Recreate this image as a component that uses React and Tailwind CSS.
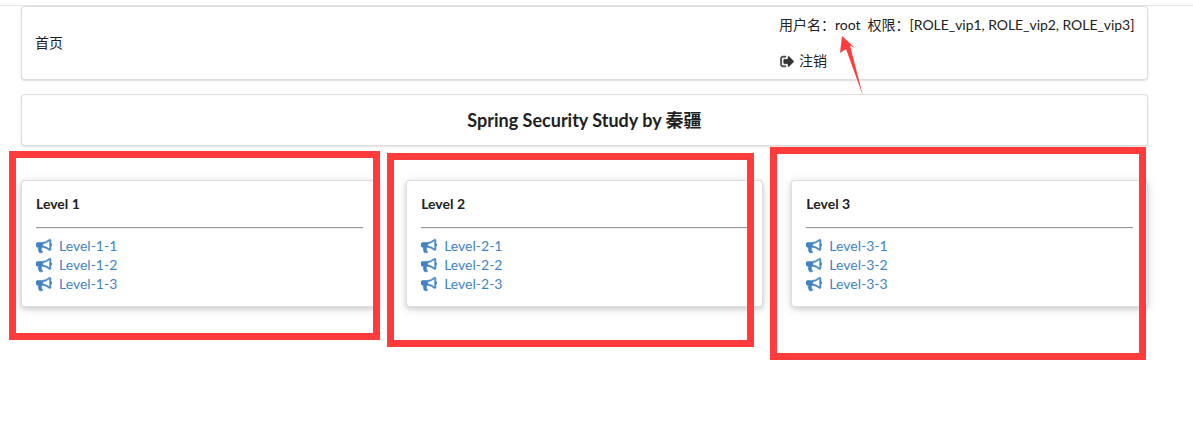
const levels = [1, 2, 3];
const fontStack = "font-['Lato','Noto_Sans_CJK_SC',sans-serif]";

function BullhornIcon() {
    return (
        <svg className="mr-[7px] h-[16px] w-[16px]" viewBox="0 0 1792 1792" fill="currentColor" stroke="currentColor" strokeWidth="70">
            <path d="M1664 640q53 0 90.5 37.5t37.5 90.5-37.5 90.5-90.5 37.5v384q0 52-38 90t-90 38q-417-347-812-380-58 19-91 66t-31 100.5 40 92.5q-20 33-23 65.5t6 58 33.5 55 48 50 61.5 50.5q-29 58-111.5 83t-168.5 11.5-132-55.5q-7-23-29.5-87.5t-32-94.5-23-89-15-101 3.5-98.5 22-110.5h-122q-66 0-113-47t-47-113v-192q0-66 47-113t113-47h480q435 0 896-384 52 0 90 38t38 90v384zm-128 604v-954q-394 302-768 343v270q377 42 768 341z" />
        </svg>
    );
}

function SignOutIcon() {
    return (
        <svg className="mr-[5px] h-[15px] w-[15px] text-[#333333]" viewBox="0 0 1792 1792" fill="currentColor" stroke="currentColor" strokeWidth="70">
            <path d="M704 1440q0 4 1 20t.5 26.5-3 23.5-10 19.5-20.5 6.5h-320q-119 0-203.5-84.5t-84.5-203.5v-704q0-119 84.5-203.5t203.5-84.5h320q13 0 22.5 9.5t9.5 22.5q0 4 1 20t.5 26.5-3 23.5-10 19.5-20.5 6.5h-320q-66 0-113 47t-47 113v704q0 66 47 113t113 47h312l11.5 1 11.5 3 8 5.5 7 9 2 13.5zm928-544q0 26-19 45l-544 544q-19 19-45 19t-45-19-19-45v-288h-448q-26 0-45-19t-19-45v-384q0-26 19-45t45-19h448v-288q0-26 19-45t45-19 45 19l544 544q19 19 19 45z" />
        </svg>
    );
}

function LevelCard({ level }) {
    return (
        <div className="h-[127px] rounded-[4px] border border-[#22242626] bg-white px-[14px] pt-[13px] shadow-[0_2px_4px_0_rgba(34,36,38,0.12),0_2px_10px_0_rgba(34,36,38,0.15)]">
            <h5 className="h-[19px] text-[14px] leading-[19px] font-bold text-[#212121]">Level {level}</h5>
            <div className="mt-[14px] mb-[7px] h-[2px] border-t border-b border-t-[#999999] border-b-[#eeeeee]" />
            <ul>
                {[1, 2, 3].map((n) => (
                    <li key={n} className="flex h-[19px] items-center text-[14px] leading-[19px] text-[#4183c4]">
                        <BullhornIcon />
                        <a href="#">Level-{level}-{n}</a>
                    </li>
                ))}
            </ul>
        </div>
    );
}

export default function App() {
    return (
        <div className={`relative h-[439px] overflow-hidden bg-white pt-[5px] text-[14px] text-[#212121] ${fontStack}`}>
            <div className="border-t border-[#e5e5e5] px-[21px]">
                <div className="w-[1127px]">
                    {/* Menu */}
                    <div className="flex h-[74px] items-center justify-between rounded-[4px] border border-[#22242626] bg-white pr-[13px] pl-[13px] shadow-[0_1px_2px_0_rgba(34,36,38,0.15)]">
                        <a href="#" className="pb-[2px]">首页</a>
                        <div className="flex h-full w-[354px] flex-col pt-[8px]">
                            <div className="-ml-px h-[20px] leading-[20px] whitespace-nowrap">
                                用户名：root<span className="ml-[7px]">权限：</span><span className="tracking-[-0.05px]">[ROLE_vip1, ROLE_vip2, ROLE_vip3]</span>
                            </div>
                            <a href="#" className="mt-[16px] flex h-[20px] items-center leading-[20px]">
                                <SignOutIcon />
                                <span className="-ml-px">注销</span>
                            </a>
                        </div>
                    </div>

                    {/* Title */}
                    <div className="mt-[14px] flex h-[52px] items-center justify-center rounded-[4px] border border-[#22242626] bg-white shadow-[0_1px_2px_0_rgba(34,36,38,0.15)]">
                        <h3 className="text-[18px] font-bold">Spring Security Study by 秦疆</h3>
                    </div>

                    {/* Levels */}
                    <div className="mt-[34px] grid grid-cols-3 gap-[28.5px]">
                        {levels.map((level) => (
                            <LevelCard key={level} level={level} />
                        ))}
                    </div>
                </div>
            </div>

            {/* Annotations drawn over the page */}
            <div className="absolute top-[151px] left-[9px] h-[189px] w-[371px] border-[7px] border-[#ff3b3b]" />
            <div className="absolute top-[153px] left-[387px] h-[194px] w-[367px] border-[7px] border-[#ff3b3b]" />
            <div className="absolute top-[147px] left-[770px] h-[213px] w-[376px] border-[7px] border-[#ff3b3b]" />
            <svg className="absolute top-[30px] left-[835px] h-[70px] w-[32px]" viewBox="0 0 32 70">
                <polygon points="7,6 5,23 11,19 28,66 15,15.5 20,18" fill="#ff3b3b" />
            </svg>
        </div>
    );
}
